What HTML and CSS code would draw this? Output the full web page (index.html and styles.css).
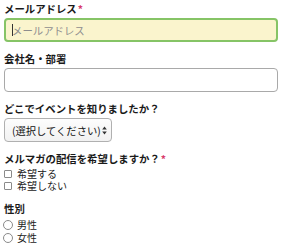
FILE: index.html
```html
<!DOCTYPE html>
<html lang="ja">
<head>
<meta charset="utf-8">
<link rel="stylesheet" href="styles.css">
</head>
<body>
<form class="form">
  <div class="field">
    <div class="title">メールアドレス<span class="req">*</span></div>
    <div class="input-wrap">
      <input class="text focus" type="text" placeholder="メールアドレス">
      <span class="caret"></span>
    </div>
  </div>
  <div class="field">
    <div class="title">会社名・部署</div>
    <input class="text" type="text">
  </div>
  <div class="field">
    <div class="title">どこでイベントを知りましたか？</div>
    <div class="select">
      <span class="select-text">(選択してください)</span>
      <svg class="arrows" width="5" height="9" viewBox="0 0 5 9"><path d="M2.5 0.5 L4.8 3.6 L0.2 3.6 Z M2.5 8.5 L4.8 5.4 L0.2 5.4 Z" fill="#333"/></svg>
    </div>
  </div>
  <div class="field">
    <div class="title">メルマガの配信を希望しますか？<span class="req">*</span></div>
    <label class="opt"><span class="box"></span>希望する</label>
    <label class="opt"><span class="box"></span>希望しない</label>
  </div>
  <div class="field">
    <div class="title">性別</div>
    <label class="opt opt-radio"><span class="radio"></span>男性</label>
    <label class="opt opt-radio"><span class="radio"></span>女性</label>
  </div>
</form>
</body>
</html>
```

FILE: styles.css
```css
html, body {
  margin: 0;
  padding: 0;
  background: #fff;
}
body {
  font-family: "Noto Sans CJK JP", "Noto Sans", sans-serif;
  color: #222;
}
.form {
  padding: 2px 4px 0 4px;
  display: flex;
  flex-direction: column;
  gap: 10px;
}
.field {
  display: flex;
  flex-direction: column;
}
.title {
  font-size: 10.4px;
  font-weight: bold;
  line-height: 14px;
  margin-bottom: 2px;
  color: #1a1a1a;
}
.req {
  color: #d83a6c;
  margin-left: 1px;
}
.input-wrap {
  position: relative;
  width: 274px;
}
.caret {
  position: absolute;
  left: 8px;
  top: 6px;
  width: 1px;
  height: 12px;
  background: #333;
}
.text {
  display: block;
  box-sizing: border-box;
  width: 274px;
  height: 24px;
  border: 1px solid #a9a9a9;
  border-radius: 4px;
  background: #fff;
  padding: 0 7px;
  font-family: "Noto Sans CJK JP", sans-serif;
  font-size: 10.4px;
  margin: 0;
  outline: none;
}
.text.focus {
  border: 2px solid #86c466;
  background: #faf4cd;
  padding-left: 6px;
}
.text::placeholder {
  color: #8e8e8e;
}
.select {
  box-sizing: border-box;
  width: 108px;
  height: 24px;
  border: 1px solid #b0b0b0;
  border-radius: 4px;
  background: linear-gradient(#fdfdfd, #f1f1f1);
  display: flex;
  align-items: center;
  justify-content: space-between;
  padding: 0 4px 0 7px;
  font-size: 10.3px;
  color: #111;
}
.opt {
  display: flex;
  align-items: center;
  font-size: 10px;
  line-height: 12px;
  color: #222;
}
.opt-radio {
  line-height: 13px;
}
.box {
  box-sizing: border-box;
  width: 8px;
  height: 8px;
  border: 1px solid #8a8a8a;
  border-radius: 1px;
  margin: 0 5px 0 0;
  background: #fff;
}
.radio {
  box-sizing: border-box;
  width: 10px;
  height: 10px;
  border: 1px solid #8a8a8a;
  border-radius: 50%;
  margin: 0 4px 0 -1px;
  background: #fff;
}
```
